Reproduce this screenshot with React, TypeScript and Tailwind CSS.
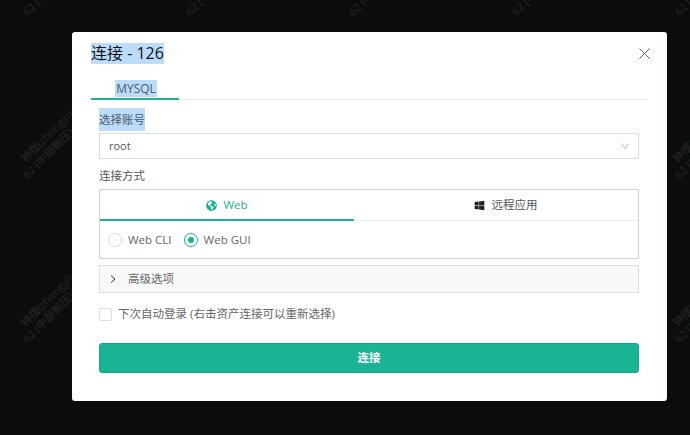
import { FaGlobeAmericas, FaWindows } from "react-icons/fa";

const font = "font-['Open_Sans','Noto_Sans_CJK_SC',sans-serif]";

const marks = [
  { x: 0, y: 0 },
  { x: 163, y: 0 },
  { x: 326, y: 0 },
  { x: 489, y: 0 },
  { x: 652, y: 0 },
  { x: 0, y: 163 },
  { x: 652, y: 163 },
  { x: 0, y: 327 },
  { x: 652, y: 327 },
];

function Watermark({ x, y }: { x: number; y: number }) {
  return (
    <div
      className="absolute -rotate-45 origin-bottom-left whitespace-nowrap text-[11px] leading-[13px] text-[#262828]"
      style={{ left: x + 29, top: y - 8 }}
    >
      <div className="ml-[10px]">钟摆(zhongyi)</div>
      <div>62 (中部輸压)</div>
    </div>
  );
}

export default function App() {
  return (
    <div className={`relative w-[690px] h-[435px] overflow-hidden bg-[#0b0d0d] pl-[72px] pt-[32px] ${font}`}>
      {/* WATERMARKS */}
      {marks.map((m) => (
        <Watermark key={`${m.x}-${m.y}`} x={m.x} y={m.y} />
      ))}

      {/* MODAL */}
      <div className="relative w-[595px] h-[369px] bg-white rounded-[3px] pt-[10px] px-[19px]">
        <div className="flex items-start justify-between h-[24px]">
          <span className="bg-[#bcdcfc] text-[16px] leading-[21px] mt-[1px] text-[#111]">连接 - 126</span>
          <svg width="11" height="11" viewBox="0 0 11 11" className="-mr-[2px] mt-[6px] text-[#666]" fill="none" stroke="currentColor" strokeWidth="1">
            <path d="M0.5 0.5l10 10M10.5 0.5l-10 10" />
          </svg>
        </div>

        {/* TAB */}
        <div className="mt-[14px] h-[20px] border-b border-[#eeeeee]">
          <div className="w-[88px] h-[20px] pl-[2px] border-b-[2px] border-[#1ab394] flex justify-center items-start">
            <span className="bg-[#bcdcfc] text-[12px] leading-[17px] px-px text-[#4f5b66]">MYSQL</span>
          </div>
        </div>

        {/* FORM */}
        <div className="ml-[8px] w-[540px]">
          <div className="mt-[8px] h-[23px] flex items-center">
            <span className="bg-[#bcdcfc] text-[11.5px] leading-[23px] text-[#4f5b66]">选择账号</span>
          </div>
          <div className="mt-[2px] h-[26px] border border-[#dddddd] flex items-center justify-between pl-[9px] pr-[9px] text-[11px] text-[#555]">
            <span>root</span>
            <svg width="8" height="6" viewBox="0 0 8 6" fill="none" stroke="#bdbdbd" strokeWidth="1">
              <path d="M0.5 0.5L4 5.5L7.5 0.5" />
            </svg>
          </div>

          <div className="mt-[9px] text-[11.5px] leading-[16px] text-[#555]">连接方式</div>

          {/* WEB / REMOTE */}
          <div className="mt-[5px] h-[70px] border border-[#d2d2d2]">
            <div className="flex h-[31px] border-b border-[#eeeeee]">
              <div className="w-[254px] h-[31px] pt-px border-b-[2px] border-[#1ab394] flex items-center justify-center gap-[6px] text-[#1ab394] text-[11.5px]">
                <FaGlobeAmericas className="w-[11px] h-[11px]" />
                <span>Web</span>
              </div>
              <div className="flex-1 flex items-center justify-center gap-[7px] pl-[19px] text-[#555] text-[11.5px]">
                <FaWindows className="w-[11px] h-[11px] text-[#222]" />
                <span>远程应用</span>
              </div>
            </div>
            <div className="flex items-center h-[37px] pl-[8px] text-[11.5px] text-[#666]">
              <span className="w-[14px] h-[14px] rounded-full border border-[#dddddd] bg-white" />
              <span className="ml-[6px]">Web CLI</span>
              <span className="ml-[12px] w-[14px] h-[14px] rounded-full border-[1.5px] border-[#1ab394] flex items-center justify-center">
                <span className="w-[6px] h-[6px] rounded-full bg-[#1ab394]" />
              </span>
              <span className="ml-[6px]">Web GUI</span>
            </div>
          </div>

          {/* ADVANCED */}
          <div className="mt-[6px] h-[28px] border border-[#dddddd] bg-[#f8f8f8] flex items-center pl-[10px] text-[11.5px] text-[#666]">
            <svg width="6" height="8" viewBox="0 0 6 8" fill="none" stroke="#333" strokeWidth="1">
              <path d="M1 0.5L5 4L1 7.5" />
            </svg>
            <span className="ml-[12px]">高级选项</span>
          </div>

          <div className="mt-[14px] flex items-center h-[14px] text-[11.5px] text-[#666]">
            <span className="w-[13px] h-[13px] rounded-[2px] border border-[#dddddd] bg-white" />
            <span className="ml-[6px]">下次自动登录 (右击资产连接可以重新选择)</span>
          </div>

          <button className="mt-[22px] w-full h-[30px] rounded-[3px] border border-[#18a689] bg-[#1ab394] text-white text-[11.5px] font-semibold">
            连接
          </button>
        </div>
      </div>
    </div>
  );
}
